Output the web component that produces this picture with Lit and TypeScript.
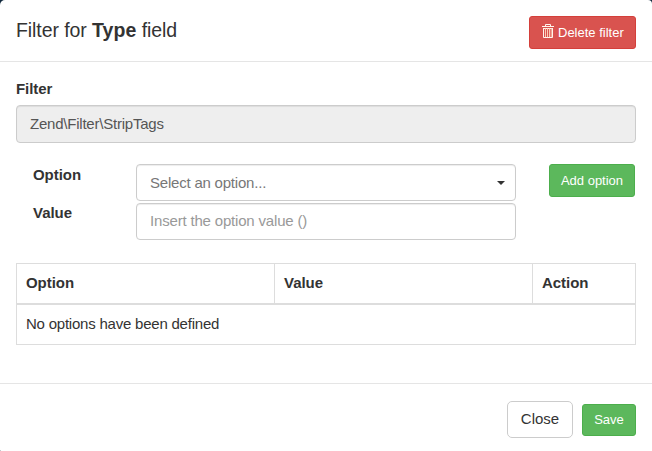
import { LitElement, html, css } from "lit";
import { customElement } from "lit/decorators.js";

@customElement("app-root")
export class AppRoot extends LitElement {
  static styles = css`
    * { box-sizing: border-box; }
    :host {
      display: block;
      background: #10283c;
      font-family: "Liberation Sans", Arial, sans-serif;
      font-size: 15px;
      line-height: 21px;
      color: #333;
    }
    .modal { height: 451px; background: #fff; border-radius: 5px 4px 0 1px; display: flex; flex-direction: column; }
    header { height: 62px; padding: 16px 16px 0; border-bottom: 1px solid #e5e5e5; display: flex; justify-content: space-between; align-items: flex-start; }
    h4 { margin: 0; font-size: 19.5px; line-height: 28px; font-weight: 400; letter-spacing: -.08px; }
    h4 b { letter-spacing: .05px; }
    .btn { font: 13px/19px "Liberation Sans", Arial, sans-serif; color: #fff; border: 1px solid; border-radius: 3px; height: 33px; padding: 0 11px; display: flex; align-items: center; justify-content: center; white-space: nowrap; }
    .danger { background: #d9534f; border-color: #d43f3a; width: 107px; gap: 4px; padding: 0 10px 0 12px; justify-content: flex-start; }
    .danger svg { margin-bottom: 3px; flex: none; }
    .success { background: #5cb85c; border-color: #4cae4c; }
    .plain { font-size: 15px; color: #333; background: #fff; border-color: #ccc; border-radius: 5px; width: 66px; height: 37px; padding-bottom: 2px; }
    main { flex: 1; padding: 16px 16px 0; }
    label { font-weight: 700; display: block; letter-spacing: -.05px; }
    .field { height: 37px; border: 1px solid #ccc; border-radius: 4px; padding: 0 13px; font: 15px/35px "Liberation Sans", Arial, sans-serif; letter-spacing: -.18px; color: #999; background: #fff; box-shadow: inset 0 1px 1px rgba(0,0,0,.075); display: flex; align-items: center; justify-content: space-between; }
    .readonly { height: 38px; margin-top: 6px; padding-bottom: 1px; background: #eee; color: #555; letter-spacing: -.22px; }
    .select { color: #777; padding-right: 10px; letter-spacing: -.21px; }
    .value { line-height: 33px; padding-bottom: 2px; }
    .caret { border: 4px solid transparent; border-top-color: #333; border-bottom: 0; }
    .form { display: grid; grid-template-columns: 103px 380px 33px 86px; grid-template-rows: 38px 37px; row-gap: 1px; justify-content: start; margin: 21px 0 23px 17px; }
    .form .caption-value { margin-top: -1px; }
    .add { grid-column: 4; }
    table { width: 620px; border-collapse: collapse; table-layout: fixed; }
    th, td { border: 1px solid #ddd; text-align: left; padding: 0 9px; height: 41px; }
    th { border-bottom-width: 2px; height: 40px; padding-bottom: 1px; letter-spacing: -.05px; }
    td { letter-spacing: -.22px; padding-bottom: 2px; }
    footer { height: 68px; border-top: 1px solid #e5e5e5; padding: 4px 16px 0; display: flex; justify-content: flex-end; align-items: center; gap: 9px; }
    .save { height: 32px; width: 54px; }
  `;

  render() {
    return html`
      <div class="modal">
        <header>
          <h4>Filter for <b>Type</b> field</h4>
          <button class="btn danger">
            <svg width="12" height="14" viewBox="0 0 12 14" fill="none" aria-hidden="true">
              <path d="M0 2.5h12M3.5 2V.5h5V2M1.5 4v9.5h9V4M1 4.5h10" stroke="#fff5ed"></path>
              <path d="M3.5 4v9M5.5 4v9M7.5 4v9M9.2 4v9" stroke="#ffd8c0" stroke-opacity=".9"></path>
            </svg>Delete filter</button>
        </header>
        <main>
          <label>Filter</label>
          <div class="field readonly">Zend\\Filter\\StripTags</div>
          <div class="form">
            <label>Option</label>
            <div class="field select">Select an option...<i class="caret"></i></div>
            <button class="btn success add">Add option</button>
            <label class="caption-value">Value</label>
            <div class="field value">Insert the option value ()</div>
          </div>
          <table>
            <colgroup><col style="width:258px"><col style="width:258px"><col></colgroup>
            <thead><tr><th>Option</th><th>Value</th><th>Action</th></tr></thead>
            <tbody><tr><td colspan="3">No options have been defined</td></tr></tbody>
          </table>
        </main>
        <footer>
          <button class="btn plain">Close</button>
          <button class="btn success save">Save</button>
        </footer>
      </div>`;
  }
}
